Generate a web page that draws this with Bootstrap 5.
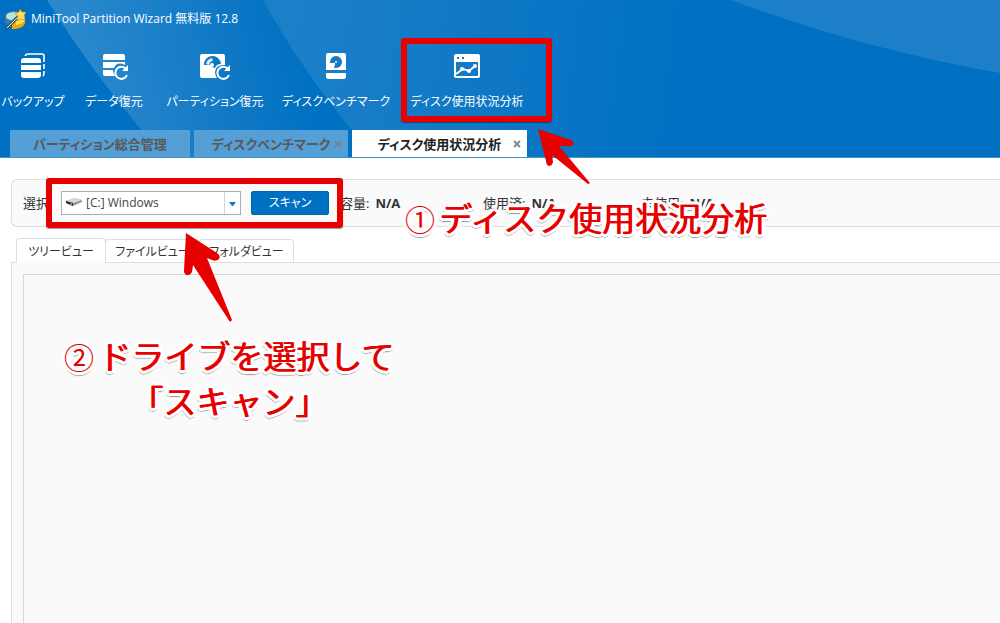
<!DOCTYPE html>
<html lang="ja">
<head>
<meta charset="utf-8">
<meta name="viewport" content="width=device-width, initial-scale=1">
<title>MiniTool Partition Wizard</title>
<link href="https://cdn.jsdelivr.net/npm/bootstrap@5.3.0/dist/css/bootstrap.min.css" rel="stylesheet">
<style>
  body { font-family: "Open Sans", "Noto Sans CJK JP", sans-serif; font-size: 13px; line-height: 20px; color: #333; background: #fff; font-feature-settings: "palt"; }
  button, select { font-feature-settings: inherit; }
  .app-header { background: #0070c2; color: #fff; border-bottom: 1px solid #3f94d2; }
  .app-header > .header-art { position: absolute; inset: 0; width: 100%; height: 100%; }
  .app-title { height: 37px; padding-left: 5px; gap: 4px; font-size: 12px; }
  .tool-row { height: 93px; padding: 15px 0 0 4px; gap: 23px; }
  .tool { color: #fff; background: none; border: 0; padding: 0; gap: 12px; height: 62px; width: 58px; font-size: 12px; white-space: nowrap; }
  .tool-md { width: 98px; }
  .tool-lg { width: 118px; }
  .tab-row { padding-left: 10px; gap: 4px; height: 27px; }
  .app-tab { background: #559fd7; color: #58595b; font-weight: 700; border: 0; padding: 0 6px 0 14px; width: 154px; height: 27px; white-space: nowrap; }
  .app-tab-wide { width: 180px; padding: 0 6px; }
  .app-tab.active { background: #fff; color: #222; width: 175px; }
  .close-x { width: 8px; height: 8px; }
  .scan-bar { margin: 21px 0 0 11px; height: 48px; padding-left: 11px; background: #fafafa; border: 1px solid #dedede; border-right: 0; border-radius: 6px 0 0 6px; white-space: nowrap; }
  .scan-label { width: 38px; }
  .drive { width: 180px; }
  .drive select { appearance: none; width: 100%; height: 24px; padding: 0 20px 0 24px; border: 1px solid #abadb9; border-radius: 0; background: #fff; color: #444; font-size: 12px; }
  .drive svg { position: absolute; pointer-events: none; }
  .drive .drive-icon { left: 5px; top: 6px; }
  .drive .drive-arrow { right: 1px; top: 1px; }
  .scan-btn { width: 78px; height: 24px; margin-left: 10px; border-radius: 2px; background: #0070c2; border: 1px solid #0067b2; color: #fff; font-size: 12px; line-height: 20px; padding: 0; }
  .stats { margin-left: 11px; }
  .stat { width: 143px; gap: 6px; }
  .stat-wide { width: 158px; }
  .view-tabs { margin: 11px 0 0 16px; height: 24px; z-index: 1; }
  .view-tab { height: 23px; width: 95px; margin-left: -1px; background: #fff; color: #333; border: 1px solid #dedede; border-bottom: 0; border-radius: 4px 4px 0 0; padding: 2px 0 0; font-size: 12px; white-space: nowrap; }
  .view-tab.active { height: 25px; width: 90px; margin: 0 0 -1px; }
  .view-body { margin-left: 11px; padding: 11px 0 0 11px; border: 1px solid #dedede; border-width: 1px 0 0 1px; background: #fafafa; }
  .view-list { border: 1px solid #d8d8d8; border-width: 1px 0 0 1px; background: #fafafa; }
  .guide { position: absolute; z-index: 3; pointer-events: none; }
  .guide-box { border: 6px solid #e60000; border-radius: 3px; box-shadow: 0 1px 1px #0006; }
  .box-analyzer { left: 401px; top: 38px; width: 151px; height: 84px; }
  .box-scan { left: 46px; top: 178px; width: 297px; height: 50px; }
  .arrow-analyzer { left: 530px; top: 120px; }
  .arrow-scan { left: 175px; top: 225px; }
  .guide-text { font: 400 33px/44px "Noto Sans CJK JP", sans-serif; font-feature-settings: normal; color: #e60000; text-align: center; white-space: nowrap; z-index: 4;
    text-shadow: 1px 0 #e60000, 4px 0 #fff, -3px 0 #fff, 0 3px #fff, 0 -3px #fff, 3px 2px #fff, -2px 2px #fff, 3px -2px #fff, -2px -2px #fff, 4px 1px #fff, -3px 1px #fff, 1px 3px #fff, -1px 3px #fff, 4px -1px #fff, -3px -1px #fff, 1px -3px #fff, -1px -3px #fff, 0 4px 1px #999, 2px 3px 1px #999, -2px 3px 1px #999; }
  .step-no { font-size: 30px; margin-right: 4px; text-shadow: 3px 0 #fff, -3px 0 #fff, 0 3px #fff, 0 -3px #fff, 2px 2px #fff, -2px 2px #fff, 2px -2px #fff, -2px -2px #fff, 0 4px 1px #999; }
  .text-analyzer { left: 405px; top: 195px; }
  .text-scan { left: 64px; top: 333px; }
</style>
</head>
<body>
<div class="position-relative min-vh-100 d-flex flex-column overflow-hidden">
  <header class="app-header position-relative">
    <svg class="header-art" viewBox="0 0 1000 157" preserveAspectRatio="xMinYMin slice" aria-hidden="true">
      <defs>
        <linearGradient id="beamA" gradientUnits="userSpaceOnUse" x1="80" y1="60" x2="300" y2="20"><stop offset="0" stop-color="#fff" stop-opacity=".17"/><stop offset="1" stop-color="#fff" stop-opacity="0"/></linearGradient>
        <linearGradient id="beamB" gradientUnits="userSpaceOnUse" x1="290" y1="60" x2="680" y2="110"><stop offset="0" stop-color="#fff" stop-opacity=".11"/><stop offset="1" stop-color="#fff" stop-opacity="0"/></linearGradient>
      </defs>
      <path d="M47 0Q98 82 165 157H400L375 157Q310 85 263 0Z" fill="url(#beamA)"/>
      <path d="M263 0Q310 85 375 157H700V0Z" fill="url(#beamB)"/>
      <path d="M731 0Q860 48 1000 73V0Z" fill="#fff" fill-opacity=".11"/>
    </svg>
    <div class="app-title d-flex align-items-center position-relative">
      <svg width="22" height="22" viewBox="0 0 22 22" aria-hidden="true">
        <path d="M0 8q0-4 8-5l11 1v5l-9 9q-9 0-10-4Z" fill="#367f98"/><path d="M1 8q1-4 9-4l3 3-6 5Q1 12 1 8Z" fill="#b9e4d9"/>
        <path d="M7 12Q19 12 20 7v8q-1 5-10 6H7Z" fill="#eda80b"/><path d="M11 12Q18 11 20 8v4q-2 4-9 5Z" fill="#ffe14b"/>
        <path d="M1 21 14 8" stroke="#31556a" stroke-width="3"/><path d="M2 20 14 8" stroke="#f4f4df" stroke-width="1"/>
        <path d="m15 1 2 3 4 0-2 4 1 4-4-1-4 2 1-5-3-3 4-1Z" fill="#ffe066" stroke="#b67c17" stroke-width=".6"/>
      </svg>
      <span>MiniTool Partition Wizard 無料版 12.8</span>
    </div>
    <nav class="tool-row d-flex position-relative" aria-label="ツール">
      <button class="tool d-flex flex-column align-items-center">
        <svg width="26" height="28" viewBox="0 0 26 28" fill="#fff"><path d="M1 9q0-3 3-3h14q3 0 3 3v2H1ZM1 13h20v5H1ZM1 20h20v3q0 3-3 3H4q-3 0-3-3Z"/><path d="M5 4q1-2 3-2h14q2 0 2 2v6M24 12v5M24 19v2q0 2-1 3" stroke="#fff" stroke-width="1.6" fill="none"/></svg>
        <span>バックアップ</span>
      </button>
      <button class="tool d-flex flex-column align-items-center">
        <svg width="28" height="28" viewBox="0 0 28 28" fill="#fff"><path d="M3 4q0-2 2-2h18q2 0 2 2v4H3ZM3 10h22v3q-8-4-11 3H3ZM3 18h10q0 4 3 6H5q-2 0-2-2Z"/><path d="M26 17A6 6 0 1 0 27 23" fill="none" stroke="#fff" stroke-width="2"/><path d="M28 13v6h-6Z"/></svg>
        <span>データ復元</span>
      </button>
      <button class="tool tool-md d-flex flex-column align-items-center">
        <svg width="30" height="28" viewBox="0 0 30 28"><path d="M2 2h21q2 0 2 2v9q-9-1-10 7 0 3 2 6H2q-2 0-2-2V4q0-2 2-2Z" fill="#fff"/><path d="M4 13A8 8 0 0 1 21 12q-5 0-6 4l-3-1-1-2Z" fill="#0878c5"/><path d="M6 12q1-5 6-6l1 3q-3 0-4 4Z" fill="#fff" opacity=".85"/><circle cx="12" cy="13" r="2" fill="#fff"/><path d="M28 17a6 6 0 1 0 1 6" fill="none" stroke="#fff" stroke-width="2"/><path d="M30 13v6h-6Z" fill="#fff"/></svg>
        <span>パーティション復元</span>
      </button>
      <button class="tool tool-md d-flex flex-column align-items-center">
        <svg width="22" height="28" viewBox="0 0 22 28"><path d="M3 1h16q2 0 2 2v15H1V3q0-2 2-2ZM1 21h20v4q0 2-2 2H3q-2 0-2-2Z" fill="#fff"/><circle cx="11" cy="10" r="6" fill="#1679c6"/><path d="M4 11h6v2l-2 4H4Z" fill="#fff"/><circle cx="11" cy="10" r="1" fill="#fff"/></svg>
        <span>ディスクベンチマーク</span>
      </button>
      <button class="tool tool-lg d-flex flex-column align-items-center">
        <svg width="28" height="28" viewBox="0 0 28 28"><rect x="1" y="2" width="26" height="24" rx="2" fill="#fff"/><path d="M3 10h22v14H3Z" fill="#1679c6"/><path d="M4 5h2v2H4ZM9 5h2v2H9Z" fill="#1679c6"/><path d="m3 22 7-5 6 2 6-5" fill="none" stroke="#fff" stroke-width="2"/><g fill="#fff"><circle cx="9" cy="17" r="2"/><circle cx="16" cy="19" r="2"/><circle cx="22" cy="14" r="2"/></g></svg>
        <span>ディスク使用状況分析</span>
      </button>
    </nav>
    <div class="tab-row d-flex position-relative">
      <button class="app-tab app-tab-wide">パーティション総合管理</button>
      <button class="app-tab d-flex align-items-center"><span class="flex-fill">ディスクベンチマーク</span><svg class="close-x" viewBox="0 0 8 8"><path d="m1 1 6 6M7 1 1 7" stroke="#77848f" stroke-width="2"/></svg></button>
      <button class="app-tab active d-flex align-items-center"><span class="flex-fill">ディスク使用状況分析</span><svg class="close-x" viewBox="0 0 8 8"><path d="m1 1 6 6M7 1 1 7" stroke="#888" stroke-width="2"/></svg></button>
    </div>
  </header>

  <main class="flex-grow-1 d-flex flex-column">
    <section class="scan-bar d-flex align-items-center">
      <label class="scan-label" for="drive">選択:</label>
      <div class="drive position-relative">
        <select id="drive"><option>[C:] Windows</option></select>
        <svg class="drive-icon" width="16" height="12" viewBox="0 0 16 12"><path d="M0 4 9 1l7 2v2L7 9 0 6Z" fill="#999"/><path d="m0 4 9-3 7 2-9 3Z" fill="#d8d8d8"/><path d="m0 4 7 2v3L0 6Z" fill="#292929"/><path d="M4 6h2v2H4Z" fill="#39ad4b"/></svg>
        <svg class="drive-arrow" width="16" height="22" viewBox="0 0 16 22"><path d="M0 0v22" stroke="#d2d4da" stroke-width="2"/><path d="M5 10h7l-3 4H8Z" fill="#1676c5"/></svg>
      </div>
      <button class="scan-btn">スキャン</button>
      <div class="stats d-flex">
        <div class="stat d-flex"><span>容量:</span><b>N/A</b></div>
        <div class="stat stat-wide d-flex"><span>使用済:</span><b>N/A</b></div>
        <div class="stat d-flex"><span>未使用:</span><b>N/A</b></div>
      </div>
    </section>
    <div class="view-tabs d-flex align-items-end position-relative">
      <button class="view-tab active">ツリービュー</button>
      <button class="view-tab">ファイルビュー</button>
      <button class="view-tab">フォルダビュー</button>
    </div>
    <section class="view-body flex-grow-1 d-flex flex-column">
      <div class="view-list flex-grow-1"></div>
    </section>
  </main>

  <div class="guide guide-box box-analyzer"></div>
  <div class="guide guide-box box-scan"></div>
  <svg class="guide arrow-analyzer" width="66" height="70" viewBox="530 120 66 70" aria-hidden="true"><path d="M538 129 571 140Q575 142 573 145 571 147 567 146L559 146 590 183 588 184 552 155 553 162Q552 166 549 166 546 165 546 161Z" fill="#e60000"/></svg>
  <svg class="guide arrow-scan" width="62" height="102" viewBox="175 225 62 102" aria-hidden="true"><path d="M186 233 217 253Q221 256 219 259 216 262 212 260L207 258 232 320 230 322 193 265 192 272Q190 276 187 275 184 274 184 271Z" fill="#e60000"/></svg>
  <div class="guide guide-text text-analyzer"><span class="step-no">①</span>ディスク使用状況分析</div>
  <div class="guide guide-text text-scan"><span class="step-no">②</span>ドライブを選択して<br>「スキャン」</div>
</div>
<script src="https://cdn.jsdelivr.net/npm/bootstrap@5.3.0/dist/js/bootstrap.bundle.min.js"></script>
</body>
</html>
